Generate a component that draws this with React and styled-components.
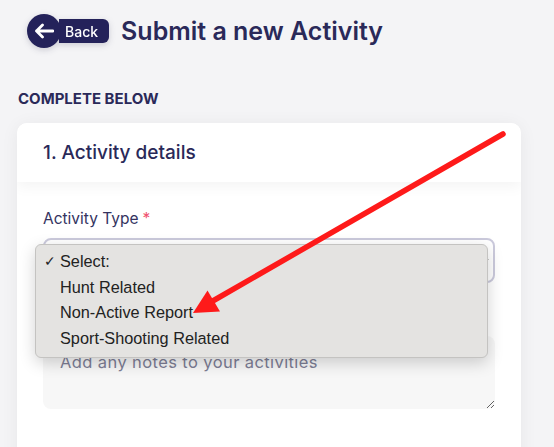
import React from "react";
import styled, { createGlobalStyle } from "styled-components";

const GlobalStyle = createGlobalStyle`
  html, body {
    margin: 0;
    padding: 0;
    background: #f4f4f6;
  }
  body {
    font-family: "Inter", "Noto Sans", sans-serif;
    color: #29285a;
  }
  * { box-sizing: border-box; }
`;

const Page = styled.div`
  position: relative;
  height: 447px;
  overflow: hidden;
  padding: 14px 33px 0 17px;
`;

const TopBar = styled.div`
  display: flex;
  align-items: center;
  gap: 12px;
  padding-left: 10px;
`;

const BackButton = styled.button`
  display: inline-flex;
  align-items: center;
  border: none;
  background: none;
  padding: 0;
  cursor: pointer;
  filter: drop-shadow(0 2px 3px rgba(20, 20, 60, 0.18));
`;

const IconCircle = styled.span`
  width: 34px;
  height: 34px;
  border-radius: 50%;
  background: #24225a;
  display: flex;
  align-items: center;
  justify-content: center;
  position: relative;
  z-index: 1;
`;

const BackLabel = styled.span`
  height: 24px;
  display: flex;
  align-items: center;
  background: #24225a;
  color: #fff;
  font-family: "Inter", sans-serif;
  font-size: 14px;
  font-weight: 500;
  border-radius: 0 6px 6px 0;
  margin-left: -2px;
  padding: 0 11px 0 6px;
`;

const Title = styled.h1`
  margin: 0;
  font-family: "Inter", sans-serif;
  font-size: 25px;
  font-weight: 600;
  color: #2a2959;
  letter-spacing: 0;
`;

const SectionLabel = styled.div`
  margin: 41px 0 0 1px;
  font-family: "Inter", sans-serif;
  font-size: 15px;
  font-weight: 700;
  color: #2a2959;
  text-transform: uppercase;
`;

const Card = styled.div`
  margin-top: 15px;
  background: #fff;
  border-radius: 10px;
  box-shadow: 0 2px 18px rgba(0, 0, 0, 0.06);
  height: 420px;
  overflow: hidden;
`;

const CardHeader = styled.div`
  height: 59px;
  display: flex;
  align-items: center;
  padding: 0 26px;
  font-family: "Inter", sans-serif;
  font-size: 19px;
  font-weight: 500;
  color: #2a2959;
  background: #fff;
  position: relative;
  z-index: 1;
  box-shadow: 0 4px 14px rgba(0, 0, 0, 0.05);
`;

const CardBody = styled.div`
  padding: 27px 26px 0;
  position: relative;
`;

const FieldLabel = styled.label`
  display: block;
  font-family: "Inter", sans-serif;
  font-size: 15.5px;
  color: #34335f;
  margin-bottom: 10px;
`;

const Required = styled.span`
  color: #f0506e;
  margin-left: 4px;
`;

const SelectBox = styled.div`
  height: 45px;
  border: 2px solid #cbcadc;
  border-radius: 8px;
  background: #fff;
  display: flex;
  align-items: center;
  justify-content: flex-end;
  padding-right: 4px;
`;

const TextArea = styled.textarea`
  display: block;
  width: 100%;
  height: 73px;
  margin-top: 53px;
  border: none;
  border-radius: 8px;
  background: #f7f7f7;
  padding: 16px 17px 0;
  font-family: "Inter", sans-serif;
  font-size: 16.5px;
  letter-spacing: 0.4px;
  resize: vertical;
  outline: none;
  &::placeholder {
    color: #7d7e95;
  }
`;

const Menu = styled.ul`
  position: absolute;
  left: 18px;
  top: 62px;
  width: 453px;
  height: 114px;
  margin: 0;
  padding: 4px 0 0;
  list-style: none;
  background: #e4e3e1;
  border: 1px solid #c4c3c1;
  border-radius: 6px;
  box-shadow: 0 5px 16px rgba(0, 0, 0, 0.18);
  font-family: "Liberation Sans", "Helvetica", sans-serif;
  font-size: 16.3px;
  color: #222;
  z-index: 5;
`;

const MenuItem = styled.li`
  position: relative;
  height: 25.7px;
  line-height: 25.7px;
  padding-left: 24px;
`;

const Check = styled.span`
  position: absolute;
  left: 8px;
  top: 0;
  font-size: 14px;
`;

const ArrowOverlay = styled.svg`
  position: absolute;
  left: 0;
  top: 0;
  width: 554px;
  height: 447px;
  pointer-events: none;
  z-index: 10;
`;

export default function App() {
  const options = ["Select:", "Hunt Related", "Non-Active Report", "Sport-Shooting Related"];
  return (
    <>
      <GlobalStyle />
      <Page>
        <TopBar>
          <BackButton>
            <IconCircle>
              <svg width="20" height="16" viewBox="0 0 20 16" fill="none">
                <path d="M19 8H2.5M8.5 2L2.5 8l6 6" stroke="#fff" strokeWidth="2.8" strokeLinecap="round" strokeLinejoin="round" />
              </svg>
            </IconCircle>
            <BackLabel>Back</BackLabel>
          </BackButton>
          <Title>Submit a new Activity</Title>
        </TopBar>
        <SectionLabel>Complete below</SectionLabel>
        <Card>
          <CardHeader>1. Activity details</CardHeader>
          <CardBody>
            <FieldLabel>
              Activity Type<Required>*</Required>
            </FieldLabel>
            <SelectBox>
              <svg width="8" height="6" viewBox="0 0 8 6">
                <path d="M1 1l3 3.5L7 1" stroke="#333" strokeWidth="1.4" fill="none" />
              </svg>
            </SelectBox>
            <TextArea placeholder="Add any notes to your activities" />
            <Menu>
              {options.map((o, i) => (
                <MenuItem key={o}>
                  {i === 0 && <Check>✓</Check>}
                  {o}
                </MenuItem>
              ))}
            </Menu>
          </CardBody>
        </Card>
        <ArrowOverlay viewBox="0 0 554 447">
          <line x1="503" y1="134" x2="211" y2="302" stroke="#fe1a1a" strokeWidth="5.5" strokeLinecap="round" />
          <polygon points="193,313 207.5,290.5 220,311.5" fill="#fe1a1a" />
        </ArrowOverlay>
      </Page>
    </>
  );
}
